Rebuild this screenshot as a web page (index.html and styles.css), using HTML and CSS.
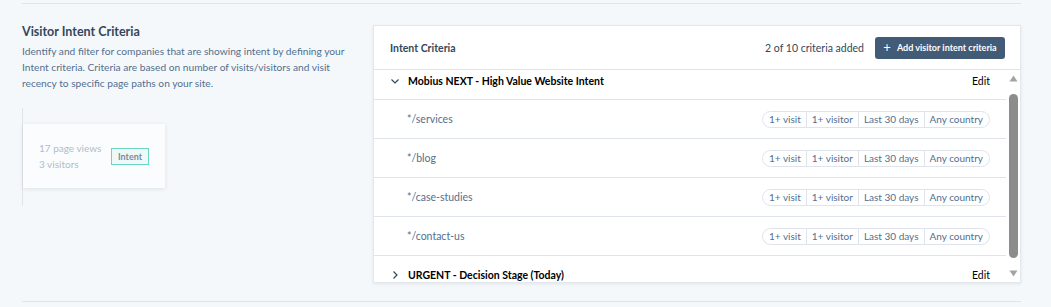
FILE: index.html
```html
<!DOCTYPE html>
<html lang="en">
<head>
    <meta charset="UTF-8">
    <meta name="viewport" content="width=device-width, initial-scale=1.0">
    <title>Visitor Intent Criteria</title>
    <link rel="stylesheet" href="styles.css">
</head>
<body>
    <div class="page">
        <section class="setting">
            <div class="intro">
                <h2>Visitor Intent Criteria</h2>
                <p>Identify and filter for companies that are showing intent by defining your Intent criteria. Criteria are based on number of visits/visitors and visit recency to specific page paths on your site.</p>
                <div class="preview">
                    <div class="preview-card">
                        <div class="preview-stats">
                            <span>17 page views</span>
                            <span>3 visitors</span>
                        </div>
                        <span class="intent-tag">Intent</span>
                    </div>
                </div>
            </div>

            <div class="panel">
                <div class="panel-header">
                    <span class="panel-title">Intent Criteria</span>
                    <span class="count">2 of 10 criteria added</span>
                    <button type="button" class="add-btn"><span class="plus">+</span>Add visitor intent criteria</button>
                </div>
                <div class="panel-body">
                    <div class="list">
                        <div class="group-row first">
                            <svg class="chev" width="10" height="10" viewBox="0 0 10 10"><path d="M1.5 3.5 L5 7 L8.5 3.5" fill="none" stroke="#33475b" stroke-width="1.2"/></svg>
                            <span class="group-name">Mobius NEXT - High Value Website Intent</span>
                            <a class="edit">Edit</a>
                        </div>
                        <div class="path-row">
                            <span class="path">*/services</span>
                            <div class="pills"><span>1+ visit</span><span>1+ visitor</span><span>Last 30 days</span><span>Any country</span></div>
                        </div>
                        <div class="path-row">
                            <span class="path">*/blog</span>
                            <div class="pills"><span>1+ visit</span><span>1+ visitor</span><span>Last 30 days</span><span>Any country</span></div>
                        </div>
                        <div class="path-row">
                            <span class="path">*/case-studies</span>
                            <div class="pills"><span>1+ visit</span><span>1+ visitor</span><span>Last 30 days</span><span>Any country</span></div>
                        </div>
                        <div class="path-row">
                            <span class="path">*/contact-us</span>
                            <div class="pills"><span>1+ visit</span><span>1+ visitor</span><span>Last 30 days</span><span>Any country</span></div>
                        </div>
                        <div class="group-row last">
                            <svg class="chev" width="10" height="10" viewBox="0 0 10 10"><path d="M3.5 1.5 L7 5 L3.5 8.5" fill="none" stroke="#33475b" stroke-width="1.2"/></svg>
                            <span class="group-name">URGENT - Decision Stage (Today)</span>
                            <a class="edit">Edit</a>
                        </div>
                    </div>
                    <div class="scrollbar">
                        <svg width="9" height="7" viewBox="0 0 9 7"><path d="M0.5 6.5 L4.5 0.5 L8.5 6.5 Z" fill="#a3a3a3"/></svg>
                        <div class="thumb"></div>
                        <svg width="9" height="7" viewBox="0 0 9 7"><path d="M0.5 0.5 L4.5 6.5 L8.5 0.5 Z" fill="#a3a3a3"/></svg>
                    </div>
                </div>
            </div>
        </section>
    </div>
</body>
</html>
```

FILE: styles.css
```css
body {
    margin: 0;
    background-color: #f5f8fa;
    font-family: "Lato", "Noto Sans", sans-serif;
    color: #33475b;
}
.page {
    height: 307px;
    overflow: hidden;
}
.setting {
    margin: 3px 30px 0 22px;
    border-top: 1px solid #dfe3eb;
    border-bottom: 1px solid #dfe3eb;
    height: 299px;
    box-sizing: border-box;
    display: flex;
}
.intro {
    width: 351px;
    padding-top: 20px;
}
.intro h2 {
    margin: 0;
    font-size: 12.5px;
    font-weight: 700;
    line-height: 16px;
    color: #33475b;
}
.intro p {
    margin: 3px 0 0;
    width: 326px;
    font-size: 10.2px;
    line-height: 16px;
    color: #516f90;
}
.preview {
    margin-top: 17px;
    border-left: 1px solid #dfe3eb;
    height: 98px;
    padding-top: 16px;
    box-sizing: border-box;
}
.preview-card {
    width: 142px;
    height: 64px;
    background: #fbfcfd;
    box-shadow: 0 1px 4px rgba(45, 62, 80, 0.12);
    display: flex;
    align-items: center;
    padding-left: 16px;
    box-sizing: border-box;
}
.preview-stats {
    display: flex;
    flex-direction: column;
    font-size: 10px;
    line-height: 16px;
    color: #b0bccb;
    width: 72px;
}
.intent-tag {
    border: 1px solid #6cd6c4;
    background: #eef9f7;
    color: #7c8b9c;
    font-size: 9px;
    font-weight: 700;
    padding: 2px 6px;
    line-height: 11px;
}
.panel {
    margin-top: 21px;
    width: 648px;
    height: 258px;
    background: #fff;
    border: 1px solid #e3e8ee;
    box-shadow: 0 1px 3px rgba(45, 62, 80, 0.1);
    box-sizing: border-box;
    display: flex;
    flex-direction: column;
    overflow: hidden;
}
.panel-header {
    height: 44px;
    box-sizing: border-box;
    flex: none;
    display: flex;
    align-items: center;
    padding: 0 15px 0 16px;
    border-bottom: 1px solid #dfe3eb;
}
.panel-title {
    font-size: 10.5px;
    font-weight: 700;
    flex: 1;
}
.count {
    font-size: 10.5px;
    color: #33475b;
    margin-right: 11px;
}
.add-btn {
    background: #425b76;
    color: #fff;
    border: none;
    border-radius: 3px;
    height: 22px;
    width: 130px;
    font-family: inherit;
    font-size: 9px;
    font-weight: 700;
    padding: 0;
    display: flex;
    align-items: center;
    justify-content: center;
}
.plus {
    font-size: 13px;
    font-weight: 400;
    margin-right: 6px;
    line-height: 1;
}
.panel-body {
    flex: 1;
    display: flex;
    min-height: 0;
}
.list {
    flex: 1;
}
.group-row {
    box-sizing: border-box;
    display: flex;
    align-items: center;
    padding: 0 16px;
    border-bottom: 1px solid #dfe3eb;
}
.group-row.first {
    height: 30px;
    padding-bottom: 8px;
}
.group-row.last {
    height: 36px;
    padding-top: 2px;
    border-bottom: none;
}
.chev {
    margin-right: 8px;
}
.group-name {
    flex: 1;
    font-size: 10.5px;
    font-weight: 700;
    color: #000;
}
.edit {
    font-size: 10.5px;
    color: #000;
}
.path-row {
    height: 39px;
    box-sizing: border-box;
    display: flex;
    align-items: center;
    padding: 0 16px 0 33px;
    border-bottom: 1px solid #dfe3eb;
}
.path {
    flex: 1;
    font-size: 10.5px;
    color: #516f90;
}
.pills {
    display: flex;
    border: 1px solid #dfe3eb;
    border-radius: 9px;
    height: 17px;
    box-sizing: border-box;
}
.pills span {
    font-size: 10px;
    color: #516f90;
    line-height: 15px;
    padding: 0 5px;
    border-left: 1px solid #dfe3eb;
}
.pills span:first-child {
    border-left: none;
    padding-left: 6px;
}
.pills span:last-child {
    padding-right: 6px;
}
.scrollbar {
    width: 14px;
    flex: none;
    display: flex;
    flex-direction: column;
    align-items: center;
    padding: 5px 0;
    gap: 12px;
    background: #fff;
}
.thumb {
    width: 9px;
    flex: 1;
    background: #8c8c8c;
    border-radius: 5px;
}
```
